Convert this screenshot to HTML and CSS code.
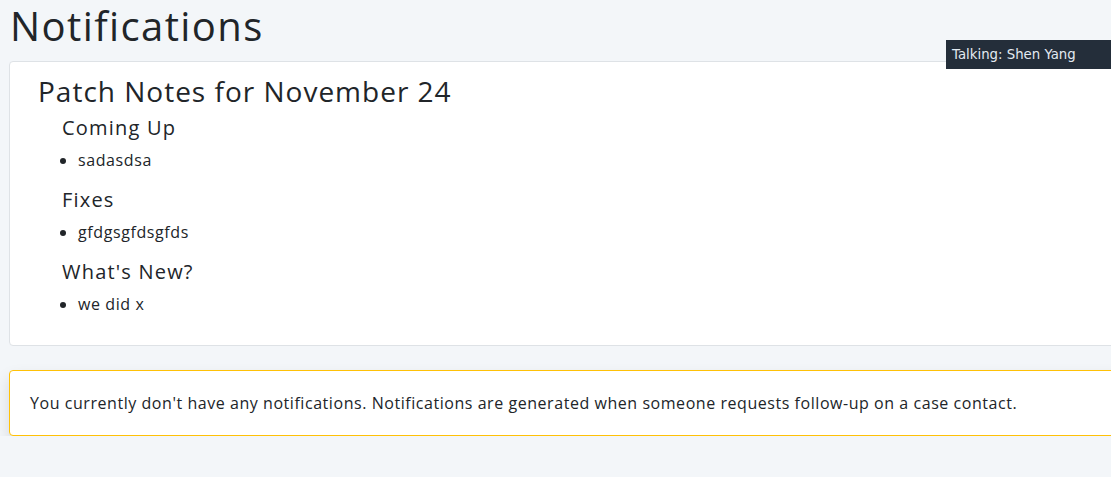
FILE: index.html
```html
<!DOCTYPE html>
<html lang="en">
<head>
<meta charset="utf-8">
<title>Notifications</title>
<link rel="stylesheet" href="styles.css">
</head>
<body>
<main class="page">
  <h1 class="page-title">Notifications</h1>
  <section class="card patch-card">
    <h3 class="patch-title">Patch Notes for November 24</h3>
    <div class="patch-body">
      <h5 class="section-title">Coming Up</h5>
      <ul class="notes">
        <li>sadasdsa</li>
      </ul>
      <h5 class="section-title">Fixes</h5>
      <ul class="notes">
        <li>gfdgsgfdsgfds</li>
      </ul>
      <h5 class="section-title">What's New?</h5>
      <ul class="notes">
        <li>we did x</li>
      </ul>
    </div>
  </section>
  <section class="card empty-card">
    <p class="empty-text">You currently don't have any notifications. Notifications are generated when someone requests follow-up on a case contact.</p>
  </section>
</main>
<div class="talking">Talking: Shen Yang</div>
</body>
</html>
```

FILE: styles.css
```css
html, body {
  overflow: hidden;
}
body {
  margin: 0;
  background: #f3f6f9;
  color: #212529;
  font-family: "Open Sans", "DejaVu Sans", sans-serif;
  font-size: 16px;
  line-height: 24px;
}
.page {
  width: 1140px;
  padding: 0 0 0 9px;
}
.page-title {
  margin: 0 0 9px 1px;
  font-size: 40px;
  font-weight: 400;
  line-height: 52px;
  letter-spacing: 1.4px;
}
.card {
  background: #fff;
  border: 1px solid #dee2e6;
  border-radius: 4px;
}
.patch-card {
  padding: 12px 28px 13px 28px;
}
.patch-title {
  margin: 0 0 8px 0;
  font-size: 28px;
  font-weight: 400;
  line-height: 34px;
  letter-spacing: 1px;
}
.patch-body {
  padding-left: 24px;
}
.section-title {
  margin: 0 0 8px 0;
  font-size: 20px;
  font-weight: 400;
  line-height: 24px;
  letter-spacing: 1.2px;
}
.notes {
  margin: 0 0 16px 0;
  padding-left: 16px;
}
.notes li {
  line-height: 24px;
  letter-spacing: 0.6px;
}
.empty-card {
  margin-top: 24px;
  border-color: #ffc107;
  padding: 20px 20px;
  box-shadow: 0 8px 16px rgba(0, 0, 0, 0.12);
}
.empty-text {
  margin: 0;
  letter-spacing: 0.55px;
}
.talking {
  position: absolute;
  top: 40px;
  left: 946px;
  width: 165px;
  height: 29px;
  box-sizing: border-box;
  padding: 5px 6px;
  background: #242e3a;
  color: #e3eaf1;
  font-family: "DejaVu Sans", sans-serif;
  font-size: 13.3px;
  line-height: 19px;
}
```
